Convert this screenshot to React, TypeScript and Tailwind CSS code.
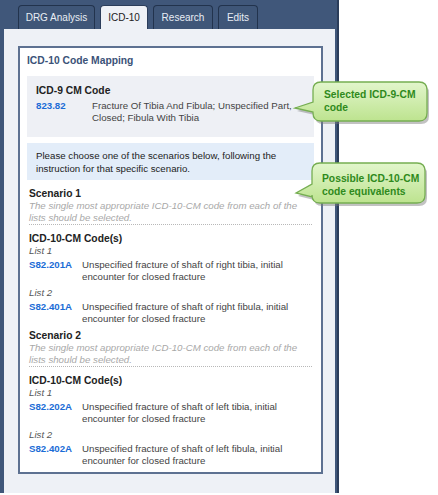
import React from 'react';

const FONT = { fontFamily: '"Liberation Sans", Arial, sans-serif' };

const tabs = [
  { label: 'DRG Analysis', w: 'w-[77px]' },
  { label: 'ICD-10', w: 'w-[48px]', active: true },
  { label: 'Research', w: 'w-[60px]' },
  { label: 'Edits', w: 'w-[40px]' },
];

const scenarios = [
  {
    title: 'Scenario 1',
    lists: [
      { name: 'List 1', code: 'S82.201A', desc: 'Unspecified fracture of shaft of right tibia, initial encounter for closed fracture' },
      { name: 'List 2', code: 'S82.401A', desc: 'Unspecified fracture of shaft of right fibula, initial encounter for closed fracture' },
    ],
  },
  {
    title: 'Scenario 2',
    lists: [
      { name: 'List 1', code: 'S82.202A', desc: 'Unspecified fracture of shaft of left tibia, initial encounter for closed fracture' },
      { name: 'List 2', code: 'S82.402A', desc: 'Unspecified fracture of shaft of left fibula, initial encounter for closed fracture' },
    ],
  },
];

const Callouts = () => (
  <svg className="pointer-events-none absolute left-0 top-0" width="438" height="495">
    <defs>
      <linearGradient id="cg" x1="0" y1="0" x2="0" y2="1">
        <stop offset="0" stopColor="#e2f6cc" />
        <stop offset="1" stopColor="#bde38f" />
      </linearGradient>
    </defs>
    <g transform="translate(2,3)" fill="#7a7a7a" opacity="0.45">
      <path d="M321 82H419Q427 82 427 90V113Q427 121 419 121H321Q313 121 313 113V112L295 108L313 102V90Q313 82 321 82Z" />
      <path d="M320 163H417Q425 163 425 171V195Q425 203 417 203H320Q312 203 312 195V197L296 193L312 184V171Q312 163 320 163Z" />
    </g>
    <g fill="url(#cg)" stroke="#76ae52" strokeWidth="1.3">
      <path d="M321 82H419Q427 82 427 90V113Q427 121 419 121H321Q313 121 313 113V112L295 108L313 102V90Q313 82 321 82Z" />
      <path d="M320 163H417Q425 163 425 171V195Q425 203 417 203H320Q312 203 312 195V197L296 193L312 184V171Q312 163 320 163Z" />
    </g>
  </svg>
);

export default function App() {
  return (
    <div className="relative h-[495px] w-[438px] bg-white" style={FONT}>
      <div className="flex h-[493px] w-[339px] flex-col border-r-2 border-[#2b3d5a] bg-[#40577a] pt-[5px]">
        <div className="flex h-[24px] gap-[5px] pl-[18px]">
          {tabs.map((t) => (
            <div
              key={t.label}
              className={`${t.w} flex items-center justify-center rounded-t-[4px] border border-b-0 text-[10px] ${
                t.active
                  ? 'border-[#2b3d5a] bg-[#eef1f6] text-[#222]'
                  : 'border-[#22334d] bg-[#3f5678] text-[#e8edf4]'
              }`}
            >
              {t.label}
            </div>
          ))}
        </div>
        <div className="ml-[4px] mr-[2px] flex-1 bg-[#eef1f6] pb-[14px] pl-[14px] pr-[12px] pt-[17px]">
          <div className="h-[428px] border-2 border-[#5d7191] bg-white px-[7px] pt-[7px] text-[9.7px] leading-[12px] text-[#333]">
            <div className="text-[10.3px] font-bold leading-[12px] text-[#3b5278]">ICD-10 Code Mapping</div>
            <div className="mt-[9px] bg-[#eef0f5] px-[9px] pb-[13px] pt-[9px]">
              <div className="text-[10.3px] font-bold leading-[12px] text-[#222]">ICD-9 CM Code</div>
              <div className="mt-[3px] flex">
                <div className="w-[56px] shrink-0 font-bold text-[#1b6cd6]">823.82</div>
                <div className="text-[#444]">Fracture Of Tibia And Fibula; Unspecified Part, Closed; Fibula With Tibia</div>
              </div>
            </div>
            <div className="mt-[6px] bg-[#e3edf9] px-[9px] pb-[5px] pt-[6px] leading-[13px] text-[#222]">
              Please choose one of the scenarios below, following the instruction for that specific scenario.
            </div>
            <div className="px-[2px]">
              {scenarios.map((s, i) => (
                <div key={s.title} className={i === 0 ? 'mt-[8px]' : 'mt-[5px]'}>
                  <div className="text-[10.3px] font-bold leading-[12px] text-[#222]">{s.title}</div>
                  <div className="border-b border-dotted border-[#b8b8b8] italic text-[#a8a8a8]">
                    The single most appropriate ICD-10-CM code from each of the lists should be selected.
                  </div>
                  <div className="mt-[8px] text-[10.3px] font-bold leading-[12px] text-[#222]">ICD-10-CM Code(s)</div>
                  {s.lists.map((l, j) => (
                    <div key={l.code} className={j === 0 ? '' : 'mt-[4px]'}>
                      <div className="italic leading-[12px] text-[#555]">{l.name}</div>
                      <div className="mt-[2px] flex">
                        <div className="w-[53px] shrink-0 font-bold text-[#1b6cd6]">{l.code}</div>
                        <div className="text-[#444]">{l.desc}</div>
                      </div>
                    </div>
                  ))}
                </div>
              ))}
            </div>
          </div>
        </div>
      </div>
      <Callouts />
      <div className="absolute left-[324px] top-[88px] text-[10.3px] font-bold leading-[13px] text-[#2f8a1c]">
        Selected ICD-9-CM
        <br />
        code
      </div>
      <div className="absolute left-[322px] top-[172px] text-[10.3px] font-bold leading-[13px] text-[#2f8a1c]">
        Possible ICD-10-CM
        <br />
        code equivalents
      </div>
    </div>
  );
}
